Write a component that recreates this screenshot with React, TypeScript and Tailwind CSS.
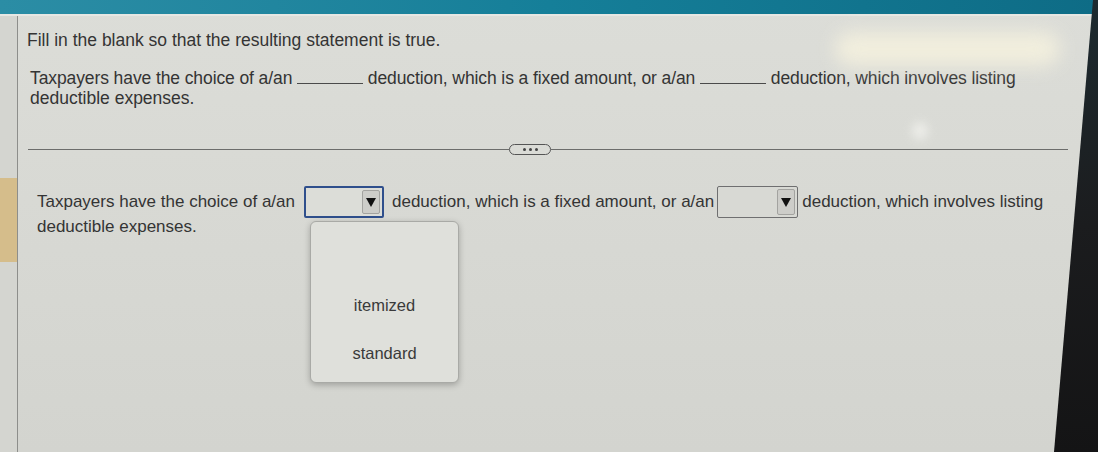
import React from "react";

function Arrow() {
  return (
    <svg width="10" height="9" viewBox="0 0 10 9" aria-hidden="true">
      <polygon points="0,0 10,0 5,9" fill="#111" />
    </svg>
  );
}

function Select({
  focused,
  className,
  children,
}: {
  focused?: boolean;
  className: string;
  children?: React.ReactNode;
}) {
  return (
    <span className={"relative inline-flex " + className}>
      <span
        className={
          focused
            ? "flex h-[32px] w-[80px] items-stretch justify-end rounded-[2px] border-2 border-[#2f4f8c] bg-[#dcddd8] p-[2px]"
            : "flex h-[32px] w-[81px] items-stretch justify-end rounded-[2px] border-[1.5px] border-[#6f6f70] bg-[#d8d9d4] p-[2px]"
        }
      >
        <span className="flex w-[18px] items-center justify-center rounded-[2px] border border-[#a3a3a0] bg-[#cdcdc9]">
          <Arrow />
        </span>
      </span>
      {children}
    </span>
  );
}

function Blank() {
  return <span className="inline-block w-[66px] border-b border-[#4a4a4a] align-baseline" />;
}

export default function App() {
  return (
    <div className="relative h-[452px] w-[1098px] overflow-hidden bg-gradient-to-b from-[#dcddd8] to-[#d3d4cf] font-['Liberation_Sans',Arial,sans-serif] text-[17px] leading-[20px] text-[#343434]">
      {/* header bar */}
      <div className="h-[14px] bg-gradient-to-r from-[#2b8da5] via-[#157f99] to-[#0e6c86]" />
      <div className="h-[2px] bg-[#e6e7e3]" />

      <div className="flex h-[436px]">
        {/* left rail */}
        <div className="flex w-[18px] shrink-0 flex-col border-r border-[#8d8e8b] bg-[#d4d5d0]">
          <div className="mt-[162px] h-[84px] w-[17px] bg-[#d5bd8b]" />
        </div>

        {/* question area */}
        <div className="flex-1 pr-[30px]">
          <p className="mt-[14px] pl-[9px] text-[17.5px]">Fill in the blank so that the resulting statement is true.</p>

          <div className="mt-[18px] pl-[12px] text-[17.5px]">
            <p className="whitespace-nowrap tracking-[-0.1px]">
              Taxpayers have the choice of a/an <Blank /> deduction, which is a fixed amount, or a/an <Blank />{" "}
              deduction, which involves listing
            </p>
            <p>deductible expenses.</p>
          </div>

          {/* divider with expand handle */}
          <div className="mt-[36px] flex items-center pl-[10px]">
            <div className="h-[1px] flex-1 bg-[#6c6d6b]" />
            <button className="flex h-[11px] w-[42px] items-center justify-center gap-[3px] rounded-full border-[1.5px] border-[#555] bg-[#dadbd6]">
              <span className="h-[3px] w-[3px] rounded-full bg-[#444]" />
              <span className="h-[3px] w-[3px] rounded-full bg-[#444]" />
              <span className="h-[3px] w-[3px] rounded-full bg-[#444]" />
            </button>
            <div className="h-[1px] w-[517px] bg-[#6c6d6b]" />
          </div>

          <div className="mt-[31px] pl-[19px]">
            <div className="flex h-[32px] items-center whitespace-nowrap">
              <span>Taxpayers have the choice of a/an</span>
              <Select focused className="ml-[9px] mr-[8px]">
                <div className="absolute left-[6px] top-[35px] flex h-[162px] w-[149px] flex-col items-center rounded-[6px] border border-[#a9aaa6] bg-[#dfe0db] pt-[73px] text-[16.5px] text-[#3a3a3a] shadow-[0_2px_6px_rgba(0,0,0,0.25)]">
                  <span className="leading-[20px]">itemized</span>
                  <span className="mt-[28px] leading-[20px]">standard</span>
                </div>
              </Select>
              <span>deduction, which is a fixed amount, or a/an</span>
              <Select className="ml-[3px] mr-[4px]" />
              <span>deduction, which involves listing</span>
            </div>
            <p className="mt-[-1px]">deductible expenses.</p>
          </div>
        </div>
      </div>

      {/* screen glare */}
      <div className="pointer-events-none absolute left-[835px] top-[32px] h-[34px] w-[225px] rounded-full bg-[#f7f3df] opacity-80 blur-[9px]" />
      <div className="pointer-events-none absolute left-[912px] top-[122px] h-[18px] w-[16px] rounded-full bg-[#f4f4f0] opacity-70 blur-[5px]" />

      {/* monitor bezel */}
      <div className="absolute right-0 top-0 h-[452px] w-[48px] bg-gradient-to-b from-[#1d2b30] via-[#1b1c1e] to-[#141415] [clip-path:polygon(43px_0,100%_0,100%_100%,4px_100%)]" />
    </div>
  );
}
